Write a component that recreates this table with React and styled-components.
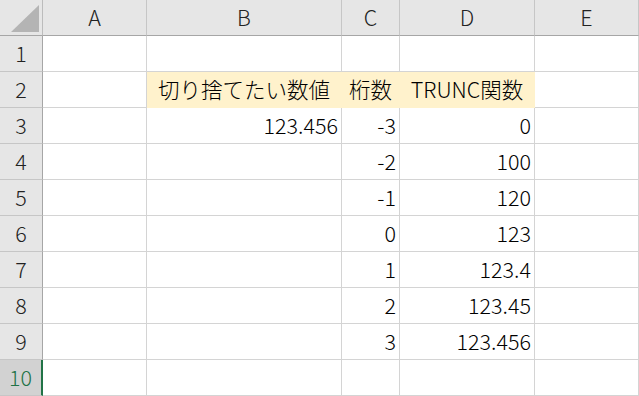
import React from 'react';
import styled, { createGlobalStyle } from 'styled-components';

const GlobalStyle = createGlobalStyle`
  html, body {
    margin: 0;
    padding: 0;
    background: #ffffff;
  }
  body {
    font-family: "Noto Sans CJK JP", "Noto Sans", sans-serif;
  }
`;

const COLS = ['A', 'B', 'C', 'D', 'E'];
const WIDTHS = [104, 195, 58, 135, 104];

const Sheet = styled.div`
  display: grid;
  grid-template-columns: 43px ${WIDTHS.map((w) => `${w}px`).join(' ')};
  grid-auto-rows: 36px;
  width: 639px;
  height: 396px;
  overflow: hidden;
  font-size: 21.5px;
  font-weight: 300;
  color: #000;
`;

const Corner = styled.div`
  position: relative;
  background: #e6e6e6;
  border-right: 1px solid #bcbcbc;
  border-bottom: 1px solid #a6a6a6;
  box-sizing: border-box;

  svg {
    position: absolute;
    left: 0;
    top: 0;
  }
`;

const ColHead = styled.div`
  display: flex;
  align-items: center;
  justify-content: center;
  background: #e6e6e6;
  border-right: 1px solid #c6c6c6;
  border-bottom: 1px solid #a6a6a6;
  box-sizing: border-box;
  color: #222;
  padding-bottom: 2px;
`;

const RowHead = styled.div`
  display: flex;
  align-items: center;
  justify-content: center;
  background: ${(p) => (p.$active ? '#d2d2d2' : '#e6e6e6')};
  color: ${(p) => (p.$active ? '#217346' : '#222')};
  border-right: ${(p) => (p.$active ? '2px solid #217346' : '1px solid #a6a6a6')};
  border-bottom: 1px solid #c6c6c6;
  box-sizing: border-box;
  padding-bottom: 2px;
`;

const Cell = styled.div`
  display: flex;
  align-items: center;
  justify-content: ${(p) => (p.$center ? 'center' : 'flex-end')};
  padding-right: ${(p) => (p.$center ? '0' : '3px')};
  padding-bottom: 2px;
  background: ${(p) => (p.$fill ? '#fff2cc' : '#ffffff')};
  border-right: 1px solid ${(p) => (p.$fill ? '#fff2cc' : '#d4d4d4')};
  border-bottom: 1px solid ${(p) => (p.$fill ? '#fff2cc' : '#d4d4d4')};
  box-sizing: border-box;
  white-space: nowrap;
`;

const data = {
  2: { B: '切り捨てたい数値', C: '桁数', D: 'TRUNC関数' },
  3: { B: '123.456', C: '-3', D: '0' },
  4: { C: '-2', D: '100' },
  5: { C: '-1', D: '120' },
  6: { C: '0', D: '123' },
  7: { C: '1', D: '123.4' },
  8: { C: '2', D: '123.45' },
  9: { C: '3', D: '123.456' },
};

const App = () => (
  <>
    <GlobalStyle />
    <Sheet>
      <Corner>
        <svg width="42" height="35">
          <polygon points="39,5 39,32 11,32" fill="#b4b4b4" />
        </svg>
      </Corner>
      {COLS.map((c) => (
        <ColHead key={c}>{c}</ColHead>
      ))}
      {Array.from({ length: 10 }, (_, i) => i + 1).map((r) => (
        <React.Fragment key={r}>
          <RowHead $active={r === 10}>{r}</RowHead>
          {COLS.map((c) => {
            const header = r === 2 && c !== 'A' && c !== 'E';
            return (
              <Cell key={c} $fill={header} $center={header}>
                {data[r] && data[r][c]}
              </Cell>
            );
          })}
        </React.Fragment>
      ))}
    </Sheet>
  </>
);

export default App;
